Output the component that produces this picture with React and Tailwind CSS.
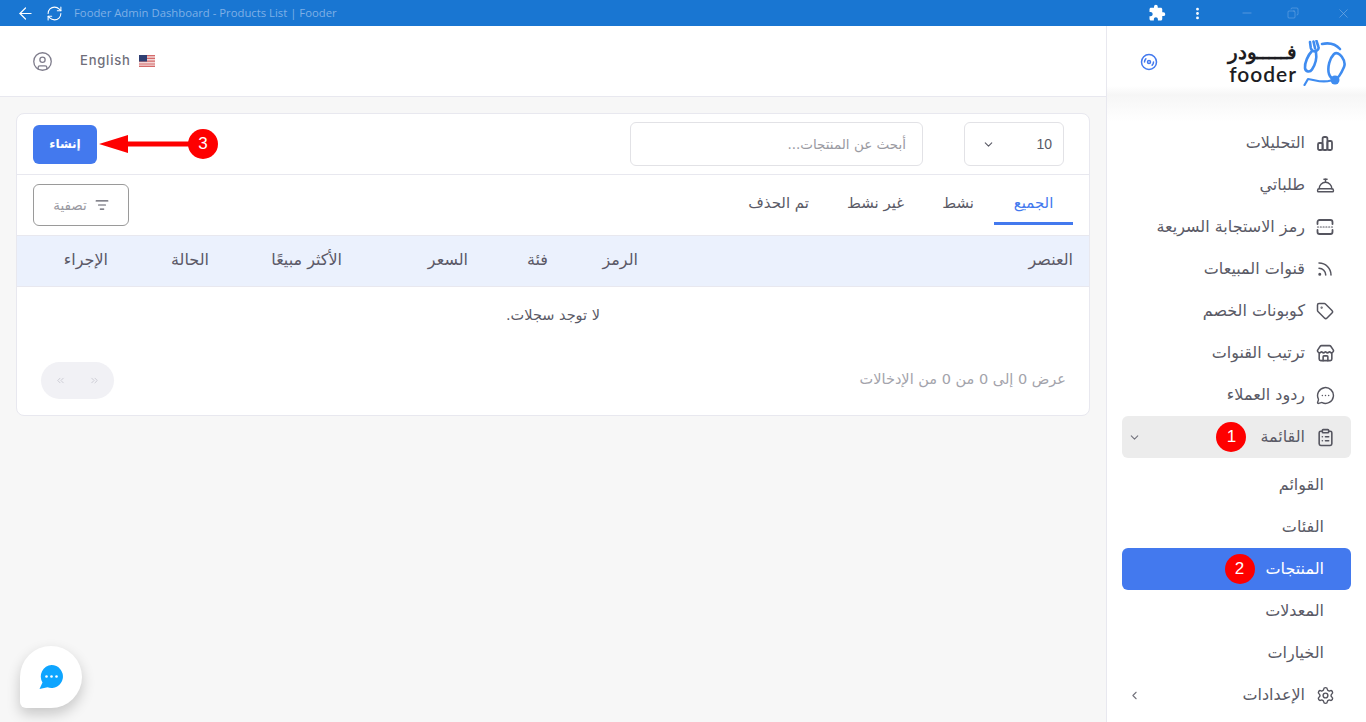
import {
  ArrowLeft,
  ChevronDown,
  ChevronLeft,
  ChevronsLeft,
  ChevronsRight,
  CircleUser,
  ClipboardList,
  ConciergeBell,
  Copy,
  Disc3,
  EllipsisVertical,
  ListFilter,
  MessageCircleMore,
  Minus,
  RefreshCw,
  Rss,
  Settings,
  Store,
  Tag,
  X,
} from "lucide-react";
import { MdExtension } from "react-icons/md";

const font = "font-['DejaVu_Sans',sans-serif]";

function BarsIcon() {
  return (
    <svg width="18" height="18" viewBox="0 0 18 18" fill="none" stroke="currentColor" strokeWidth="1.8" strokeLinejoin="round">
      <rect x="2" y="9" width="4.6" height="7" rx="1.4" />
      <rect x="6.6" y="3" width="4.8" height="13" rx="1.6" />
      <rect x="11.4" y="7" width="4.6" height="9" rx="1.4" />
    </svg>
  );
}

function QrIcon() {
  return (
    <svg width="18" height="18" viewBox="0 0 18 18" fill="none" stroke="currentColor" strokeWidth="1.8" strokeLinecap="round">
      <path d="M1.500 6V4a2 2 0 0 1 2-2h11a2 2 0 0 1 2 2v2" />
      <path d="M1.500 12v2a2 2 0 0 0 2 2h11a2 2 0 0 0 2-2v-2" />
      <path d="M1.500 9h15" strokeDasharray="1 1.800" strokeWidth="1.200" />
    </svg>
  );
}

function SideRow({ icon, label, chevron, active, badge }) {
  return (
    <div className={`flex h-[42px] items-center rounded-md pr-[16px] pl-1.5 ${active ? "bg-[#ececec]" : ""}`}>
      <span className="flex w-[20px] justify-center text-[#55555f]">{icon}</span>
      <span className="mr-[10px] pb-px text-[16px] text-[#5a5a66]">{label}</span>
      {badge && (
        <span className="mr-[14px] flex h-[30px] w-[30px] items-center justify-center rounded-full bg-[#fe0000] font-['Liberation_Sans'] text-[17px] text-white">
          {badge}
        </span>
      )}
      {chevron && <span className="mr-auto text-[#73737d]">{chevron}</span>}
    </div>
  );
}

function SubRow({ label, active, badge }) {
  return (
    <div className={`flex h-[42px] items-center rounded-md pr-[27px] ${active ? "bg-[#4379ee] text-white" : "text-[#5a5a66]"}`}>
      <span className="pb-px text-[16px]">{label}</span>
      {badge && (
        <span className="mr-[11px] flex h-[30px] w-[30px] items-center justify-center rounded-full bg-[#fe0000] font-['Liberation_Sans'] text-[17px] font-normal text-white">
          {badge}
        </span>
      )}
    </div>
  );
}

function Logo() {
  return (
    <div className="flex items-start gap-1.5" dir="ltr">
      <div className="flex w-[70px] flex-col items-end text-[#1d1d22]">
        <span className="h-[23px] font-['Noto_Sans'] text-[20px] leading-[23px] font-semibold" dir="rtl">فـــــودر</span>
        <span className="font-['Lato'] text-[21px] leading-[22px] font-semibold tracking-[1px]">fooder</span>
      </div>
      <svg width="44" height="46" viewBox="0 0 44 46" fill="none" stroke="#3f8cf0" strokeWidth="2.600" strokeLinecap="round" strokeLinejoin="round">
        <path d="M9 11C5 15 1.500 23 2 28c.4 4 5 4.500 7 1.500 3-4.500 5-11 4-17" />
        <path d="M7 2l.8 6c.4 2.500 3.400 4 5.500 3 2-1 2.800-2.600 2-4.500L13.500 1M10.500 1.500l1.600 7" />
        <path d="M19 4c7-1.500 14 .5 18 5" />
        <path d="M31 14c-4 4-7 13-5 20 1 3 3 5 6 5s6-5 9-12c2.500-6-5-17-10-13z" />
        <path d="M1.500 45l3.500-6c7 .6 13 4.500 23 1.500" strokeWidth="2.200" />
        <circle cx="32" cy="40" r="4.500" fill="#3f8cf0" stroke="none" />
      </svg>
    </div>
  );
}

export default function App() {
  return (
    <div className={`flex h-[722px] flex-col overflow-hidden bg-[#f7f7f7] ${font}`}>
      {/* title bar */}
      <div className="flex h-[26px] shrink-0 items-center bg-[#1976d2] text-white" dir="ltr">
        <ArrowLeft size={19} strokeWidth={1.5} className="ml-[16px]" />
        <RefreshCw size={17} strokeWidth={1.5} className="ml-[11px]" />
        <span className="ml-[11px] font-['Open_Sans'] text-[11.3px] text-[#7fb0e6]">Fooder Admin Dashboard - Products List | Fooder</span>
        <MdExtension size={18} className="mr-[24px] ml-auto" />
        <EllipsisVertical size={15} strokeWidth={2.5} />
        <Minus size={14} strokeWidth={1} className="ml-[35px] text-[#7fb0e6]" />
        <Copy size={12} strokeWidth={1} className="ml-[33px] -scale-x-100 text-[#7fb0e6]" />
        <X size={15} strokeWidth={1} className="mr-[15px] ml-[37px] text-[#7fb0e6]" />
      </div>

      <div className="flex min-h-0 flex-1" dir="rtl">
        {/* sidebar */}
        <aside className="flex w-[260px] shrink-0 flex-col border-l border-[#e8e8ef] bg-white">
          <div className="flex h-[60px] items-start justify-between pt-[14px] pr-[19px] pl-[33px]">
            <Logo />
            <Disc3 size={18} strokeWidth={2} className="mt-[13px] text-[#4379ee]" />
          </div>
          <div className="h-[36px] bg-gradient-to-b from-white via-[#f6f6f6] via-25% to-white" />
          <nav className="flex flex-col px-[15px]">
            <SideRow icon={<BarsIcon />} label="التحليلات" />
            <SideRow icon={<ConciergeBell size={19} strokeWidth={1.8} />} label="طلباتي" />
            <SideRow icon={<QrIcon />} label="رمز الاستجابة السريعة" />
            <SideRow icon={<Rss size={18} strokeWidth={2} />} label="قنوات المبيعات" />
            <SideRow icon={<Tag size={18} strokeWidth={2} />} label="كوبونات الخصم" />
            <SideRow icon={<Store size={19} strokeWidth={2} />} label="ترتيب القنوات" />
            <SideRow icon={<MessageCircleMore size={19} strokeWidth={1.8} />} label="ردود العملاء" />
            <SideRow icon={<ClipboardList size={19} strokeWidth={2} />} label="القائمة" active badge="1" chevron={<ChevronDown size={13} />} />
            <div className="mt-1.5 flex flex-col">
              <SubRow label="القوائم" />
              <SubRow label="الفئات" />
              <SubRow label="المنتجات" active badge="2" />
              <SubRow label="المعدلات" />
              <SubRow label="الخيارات" />
            </div>
            <SideRow icon={<Settings size={19} strokeWidth={1.8} />} label="الإعدادات" chevron={<ChevronLeft size={13} />} />
          </nav>
        </aside>

        {/* main */}
        <main className="flex min-w-0 flex-1 flex-col">
          <header className="flex h-[71px] shrink-0 items-center border-b border-[#e8e8ef] bg-white pl-[32px]" dir="ltr">
            <CircleUser size={21} strokeWidth={1.5} className="text-[#7f7d8c]" />
            <span className="ml-[27px] font-['Inter'] text-[13px] font-medium tracking-[.8px] text-[#6f6e7a]">English</span>
            <svg width="16" height="12" viewBox="0 0 16 12" className="ml-[8px]">
              <rect width="16" height="12" fill="#f3d6d6" />
              <path d="M0 .6h16M0 3.400h16M0 6.200h16M0 9h16M0 11.400h16" stroke="#d46a6a" strokeWidth="1.200" />
              <rect width="8" height="6.500" fill="#2f3f73" />
            </svg>
          </header>

          <div className="mx-4 mt-4 rounded-lg border border-[#e8e8ef] bg-white">
            {/* toolbar */}
            <div className="relative flex h-[61px] items-center border-b border-[#e8e8ef] pr-[25px] pl-4">
              <div className="flex h-[44px] w-[100px] items-center justify-between rounded-md border border-[#e2e2e6] pr-[11px] pl-[17px] text-[#5a5a66]" dir="rtl">
                <span className="font-['Liberation_Sans'] text-[14px]">10</span>
                <ChevronDown size={13} />
              </div>
              <div className="mr-[41px] flex h-[44px] w-[293px] items-center rounded-md border border-[#e2e2e6] pr-4 text-[13.5px] text-[#9a9aa2]">
                أبحث عن المنتجات...
              </div>
              <button className="mr-auto flex h-[39px] w-[64px] items-center justify-center rounded-md bg-[#4379ee] text-[12px] font-semibold text-white">
                إنشاء
              </button>
              {/* step 3 arrow */}
              <div className="absolute top-[15px] left-[82px] flex h-[30px] items-center" dir="ltr">
                <svg width="90" height="20" viewBox="0 0 90 20" fill="#fe0000">
                  <path d="M0 10 29 1v6.500h61v5H29V19z" />
                </svg>
                <span className="-ml-px flex h-[30px] w-[30px] items-center justify-center rounded-full bg-[#fe0000] font-['Liberation_Sans'] text-[17px] text-white">3</span>
              </div>
            </div>

            {/* tabs */}
            <div className="flex h-[60px] items-start px-4">
              <div className="mt-[9px] flex h-[41px] w-[79px] items-center justify-center border-b-[3px] border-[#4379ee] text-[15px] text-[#4379ee]">الجميع</div>
              <div className="mt-[9px] mr-[20px] flex h-[38px] items-center text-[15px] text-[#5a5a66]">نشط</div>
              <div className="mt-[9px] mr-[38px] flex h-[38px] items-center text-[15px] text-[#5a5a66]">غير نشط</div>
              <div className="mt-[9px] mr-[38px] flex h-[38px] items-center text-[15px] text-[#5a5a66]">تم الحذف</div>
              <button className="mt-[9px] mr-auto flex h-[42px] w-[96px] items-center justify-center gap-2 rounded-md border border-[#9a9a9a] text-[13.5px] text-[#9a9aa2]">
                <ListFilter size={14} className="text-[#5a5a66]" />
                تصفية
              </button>
            </div>

            {/* table head */}
            <div className="flex h-[52px] items-center border-y border-[#e8e8ef] bg-[#ebf1fd] pr-4 pb-0.5 text-[16px] text-[#5b5967]">
              <span className="w-[435px]">العنصر</span>
              <span className="w-[90px]">الرمز</span>
              <span className="w-[80px]">فئة</span>
              <span className="w-[126px]">السعر</span>
              <span className="w-[133px]">الأكثر مبيعًا</span>
              <span className="w-[101px]">الحالة</span>
              <span>الإجراء</span>
            </div>

            <div className="flex h-[57px] items-center justify-center text-[14.5px] text-[#5a5a66]">لا توجد سجلات.</div>

            {/* footer */}
            <div className="flex h-[71px] items-start justify-between pt-[18px] pr-[23px] pl-[24px]">
              <span className="mt-[7px] text-[14.5px] text-[#a3a3ab]">عرض 0 إلى 0 من 0 من الإدخالات</span>
              <div className="flex h-[37px] w-[73px] items-center justify-between rounded-full bg-[#f1f1f5] px-[14px] text-[#c9c9d2]">
                <ChevronsRight size={11} />
                <ChevronsLeft size={11} />
              </div>
            </div>
          </div>
        </main>
      </div>

      {/* chat widget */}
      <button className="absolute top-[646px] left-[20px] flex h-[62px] w-[62px] items-center justify-center rounded-[31px] rounded-bl-md bg-white shadow-[0_6px_14px_rgba(0,0,0,.2)]">
        <svg width="26" height="26" viewBox="0 0 26 26">
          <path d="M13.500 1a11.500 11.500 0 1 1-4 22.300L1.500 25l3-6.500A11.500 11.500 0 0 1 13.500 1z" fill="#0ea5ff" />
          <circle cx="8.500" cy="12.500" r="1.300" fill="#fff" />
          <circle cx="13.500" cy="12.500" r="1.300" fill="#fff" />
          <circle cx="18.500" cy="12.500" r="1.300" fill="#fff" />
        </svg>
      </button>
    </div>
  );
}
